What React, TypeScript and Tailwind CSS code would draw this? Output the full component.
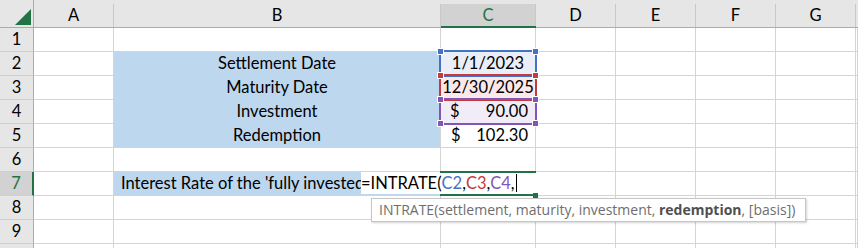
import React from "react";

const GRID = "grid grid-cols-[34px_80px_327px_95px_80px_80px_80px_80px_2px]";

function ColHeader({ label, active }: { label: string; active?: boolean }) {
  return (
    <div
      className={
        "flex flex-col h-[28px] pt-[4px] " +
        (active ? "border-b-2 border-[#217346]" : "border-b border-[#ababab]")
      }
    >
      <div
        className={
          "flex-1 flex items-center justify-center border-r border-[#c8c8c8] " +
          (active ? "bg-[#d2d2d2] text-[#217346]" : "")
        }
      >
        {label}
      </div>
    </div>
  );
}

function RowHeader({ n, active }: { n: number; active?: boolean }) {
  return (
    <div
      className={
        "h-[24px] flex items-center justify-center border-b border-[#d0d0d0] " +
        (active
          ? "bg-[#d2d2d2] text-[#217346] border-r-2 border-r-[#217346]"
          : "bg-[#e6e6e6] border-r border-r-[#ababab]")
      }
    >
      {n}
    </div>
  );
}

function Cell({ className = "", children }: { className?: string; children?: React.ReactNode }) {
  return (
    <div className={"h-[24px] border-r border-b border-[#d4d4d4] overflow-hidden whitespace-nowrap " + className}>
      {children}
    </div>
  );
}

function Blank() {
  return <Cell />;
}

function Handle({ x, y, color }: { x: number; y: number; color: string }) {
  return (
    <div
      className={"absolute w-[7px] h-[7px] border border-white " + color}
      style={{ left: x - 3, top: y - 3 }}
    />
  );
}

function RefBox({ top, border, fill }: { top: number; border: string; fill: string }) {
  return (
    <>
      <div className={"absolute left-[439px] w-[98px] h-[27px] border-2 " + border} style={{ top }} />
      <Handle x={440} y={top + 1} color={fill} />
      <Handle x={535} y={top + 1} color={fill} />
      <Handle x={440} y={top + 25} color={fill} />
      <Handle x={535} y={top + 25} color={fill} />
    </>
  );
}

export default function App() {
  const blue = "bg-[#bdd7ee]";
  return (
    <div className="relative w-[858px] h-[248px] overflow-hidden bg-white text-black text-[16.5px] font-['Lato',sans-serif] leading-none">
      {/* header */}
      <div className={GRID + " bg-[#e6e6e6]"}>
        <div className="h-[28px] border-r border-b border-[#ababab] flex items-end justify-end pr-[2px] pb-[2px]">
          <svg width="16" height="16" viewBox="0 0 16 16">
            <polygon points="16,0 16,16 0,16" fill="#217346" />
          </svg>
        </div>
        <ColHeader label="A" />
        <ColHeader label="B" />
        <ColHeader label="C" active />
        <ColHeader label="D" />
        <ColHeader label="E" />
        <ColHeader label="F" />
        <ColHeader label="G" />
        <div className="h-[28px] border-b border-[#ababab]" />
      </div>

      {/* body */}
      <div className={GRID}>
        {/* row 1 */}
        <RowHeader n={1} />
        <Blank />
        <Blank />
        <Blank />
        <Blank />
        <Blank />
        <Blank />
        <Blank />
        <Blank />

        {/* row 2 */}
        <RowHeader n={2} />
        <Blank />
        <Cell className={blue + " border-b-[#bdd7ee] flex items-center justify-center"}>Settlement Date</Cell>
        <Cell className="bg-[#e9eef8] flex items-center justify-center">1/1/2023</Cell>
        <Blank />
        <Blank />
        <Blank />
        <Blank />
        <Blank />

        {/* row 3 */}
        <RowHeader n={3} />
        <Blank />
        <Cell className={blue + " border-b-[#bdd7ee] flex items-center justify-center"}>Maturity Date</Cell>
        <Cell className="bg-[#fbe9ea] flex items-center justify-center">12/30/2025</Cell>
        <Blank />
        <Blank />
        <Blank />
        <Blank />
        <Blank />

        {/* row 4 */}
        <RowHeader n={4} />
        <Blank />
        <Cell className={blue + " border-b-[#bdd7ee] flex items-center justify-center"}>Investment</Cell>
        <Cell className="bg-[#f1ecf7] flex items-center justify-between pl-[9px] pr-[7px]">
          <span>$</span>
          <span>90.00</span>
        </Cell>
        <Blank />
        <Blank />
        <Blank />
        <Blank />
        <Blank />

        {/* row 5 */}
        <RowHeader n={5} />
        <Blank />
        <Cell className={blue + " flex items-center justify-center"}>Redemption</Cell>
        <Cell className="flex items-center justify-between pl-[10px] pr-[7px]">
          <span>$</span>
          <span>102.30</span>
        </Cell>
        <Blank />
        <Blank />
        <Blank />
        <Blank />
        <Blank />

        {/* row 6 */}
        <RowHeader n={6} />
        <Blank />
        <Blank />
        <Blank />
        <Blank />
        <Blank />
        <Blank />
        <Blank />
        <Blank />

        {/* row 7 */}
        <RowHeader n={7} active />
        <Blank />
        <Cell className={blue + " flex items-center pl-[7px]"}>
          <span className="block w-[240px] overflow-hidden whitespace-nowrap">
            Interest Rate of the 'fully invested' Security
          </span>
        </Cell>
        <Blank />
        <Blank />
        <Blank />
        <Blank />
        <Blank />
        <Blank />

        {/* rows 8-10 */}
        {[8, 9, 10].map((n) => (
          <React.Fragment key={n}>
            <RowHeader n={n} />
            <Blank />
            <Blank />
            <Blank />
            <Blank />
            <Blank />
            <Blank />
            <Blank />
            <Blank />
          </React.Fragment>
        ))}
      </div>

      {/* reference range boxes */}
      <RefBox top={50} border="border-[#4472c4]" fill="bg-[#4472c4]" />
      <RefBox top={74} border="border-[#c43b3f]" fill="bg-[#c43b3f]" />
      <RefBox top={98} border="border-[#8356b6]" fill="bg-[#8356b6]" />

      {/* edit cell C7 */}
      <div className="absolute left-[361px] top-[172px] w-[175px] h-[22px] bg-white flex items-center whitespace-nowrap">
        <span>=INTRATE(</span>
        <span className="text-[#4472c4]">C2</span>
        <span>,</span>
        <span className="text-[#c43b3f]">C3</span>
        <span>,</span>
        <span className="text-[#8356b6]">C4</span>
        <span>,</span>
        <span className="inline-block w-px h-[18px] bg-black ml-[1px]" />
      </div>
      <div className="absolute left-[440px] top-[171px] w-[96px] h-[2px] bg-[#217346]" />
      <div className="absolute left-[440px] top-[194px] w-[94px] h-[2px] bg-[#217346]" />
      <div className="absolute left-[533px] top-[193px] w-[5px] h-[5px] bg-[#217346]" />

      {/* tooltip */}
      <div className="absolute left-[371px] top-[198px] w-[435px] h-[24px] bg-white border border-[#c6c6c6] shadow-[1px_1px_2px_rgba(0,0,0,0.18)] flex items-center pl-[7px] text-[14px] text-[#6e6e6e] font-['Open_Sans',sans-serif] whitespace-nowrap">
        INTRATE(settlement, maturity, investment,&nbsp;<b className="font-bold text-[#505050]">redemption</b>, [basis])
      </div>
    </div>
  );
}
